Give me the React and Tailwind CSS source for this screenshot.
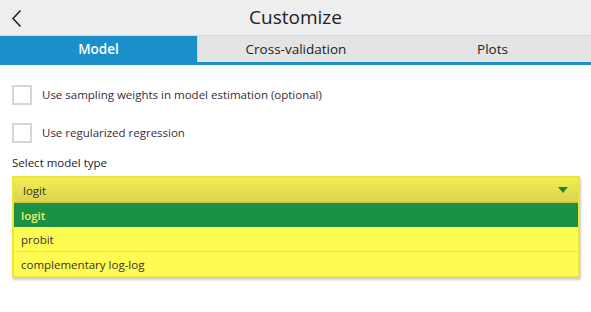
import React from 'react'

const font = { fontFamily: '"Open Sans", "Noto Sans", sans-serif' }

function Checkbox({ label }) {
  return (
    <div className="flex items-center gap-[10px] h-[20px]">
      <div className="w-[20px] h-[20px] border-2 border-[#d6d6d6] bg-white" />
      <span className="text-[11.5px] text-[#3a2a3a]">{label}</span>
    </div>
  )
}

export default function App() {
  return (
    <div className="w-[591px] h-[312px] bg-white flex flex-col" style={font}>
      <div className="h-[36px] bg-[#eeeeee] border-b border-[#d8d8d8] relative flex items-center justify-center">
        <svg className="absolute left-[11px] top-[9px]" width="12" height="19" viewBox="0 0 12 19">
          <path d="M9.5 1.5 L2 9.5 L9.5 17.5" fill="none" stroke="#222" strokeWidth="1.6" />
        </svg>
        <span className="text-[19px] text-[#222] leading-none">Customize</span>
      </div>
      <div className="flex h-[29px] border-b-[3px] border-[#1a8fc9]">
        <div className="w-[197px] bg-[#1a8fc9] text-white text-[13.5px] font-semibold flex items-center justify-center">Model</div>
        <div className="w-[197px] bg-[#e4e4e4] border-l border-[#d0d0d0] text-[#222] text-[13.5px] flex items-center justify-center">Cross-validation</div>
        <div className="flex-1 bg-[#e4e4e4] text-[#222] text-[13.5px] flex items-center justify-center">Plots</div>
      </div>
      <div className="px-[12px] pt-[20px] flex flex-col">
        <Checkbox label="Use sampling weights in model estimation (optional)" />
        <div className="h-[18px]" />
        <Checkbox label="Use regularized regression" />
        <div className="mt-[11px] text-[11.5px] text-[#222]">Select model type</div>
        <div className="mt-[5px] w-[568px] border-2 border-[#e8e636] shadow-[1px_2px_2px_rgba(0,0,0,0.2)]">
          <div className="h-[25px] bg-gradient-to-b from-[#f2ee52] to-[#dcd24c] flex items-center justify-between px-[9px] border-b border-[#c9c23a]">
            <span className="text-[11.5px] text-[#333]">logit</span>
            <svg width="10" height="6" viewBox="0 0 10 6" className="mr-[1px]">
              <path d="M0 0 H10 L5 6 Z" fill="#1f8a2a" />
            </svg>
          </div>
          <div className="h-[24px] bg-[#1a9146] flex items-center px-[7px] text-[11.5px] font-semibold text-[#f3f06a]">logit</div>
          <div className="h-[25px] bg-[#fffb50] flex items-center px-[7px] text-[11.5px] text-[#333] border-b border-[#ece84a]">probit</div>
          <div className="h-[24px] bg-[#fffb50] flex items-center px-[7px] text-[11.5px] text-[#333]">complementary log-log</div>
        </div>
      </div>
    </div>
  )
}
